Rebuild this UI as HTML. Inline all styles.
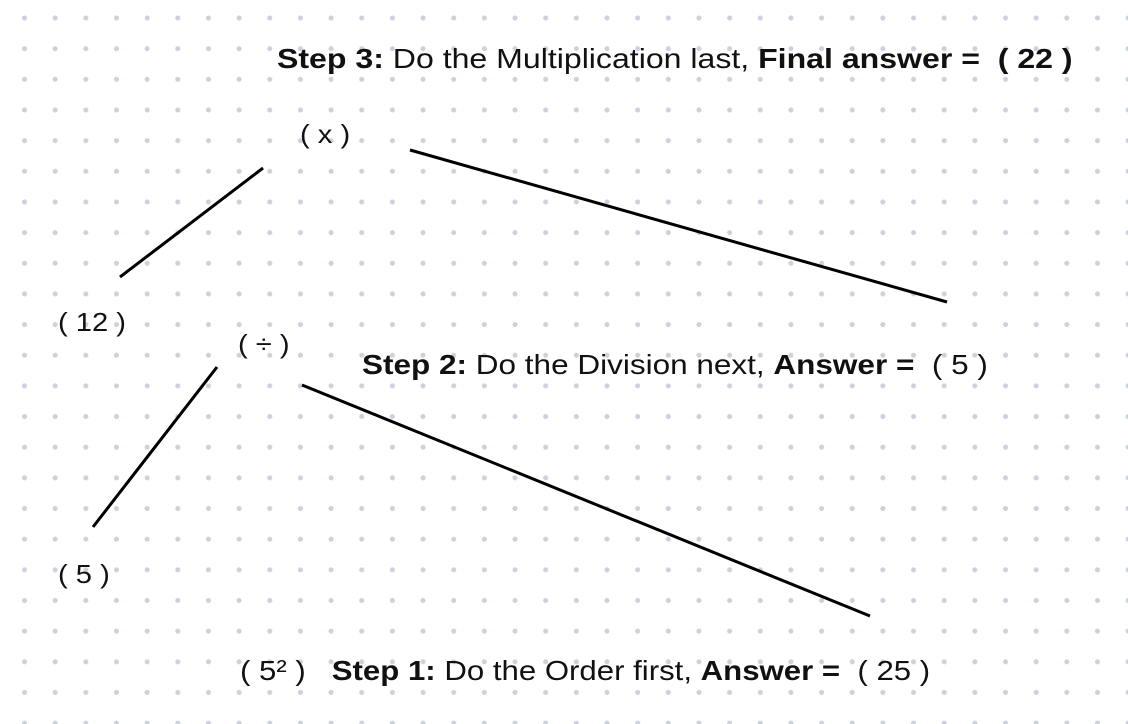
<!DOCTYPE html>
<html><head><style>
body{margin:0;width:1128px;height:724px;overflow:hidden;background-color:#fff;
background-image:radial-gradient(circle at 15.33px 15.33px,#cdd1db 2.2px,transparent 2.8px);
background-size:30.67px 30.67px;background-position:9.2px 2.7px;
font-family:"Liberation Sans",sans-serif;color:#111;position:relative}
.t{position:absolute;font-size:28px;white-space:nowrap;line-height:1;transform-origin:0 0}
b{font-weight:700}
svg{position:absolute;left:0;top:0}
</style></head><body>
<svg width="1128" height="724"><g stroke="#000" stroke-width="3" stroke-linecap="butt">
<line x1="120" y1="277" x2="263" y2="168"/>
<line x1="410" y1="150" x2="947" y2="302"/>
<line x1="217" y1="367" x2="93" y2="527"/>
<line x1="302" y1="385" x2="870" y2="616"/>
</g></svg>
<div class="t" style="left:277px;top:45px;transform:scaleX(1.145)"><b>Step 3:</b> Do the Multiplication last, <b>Final answer =&nbsp; ( 22 )</b></div>
<div class="t" style="left:300px;top:121px;font-size:26px;transform:scaleX(1.12)">( x )</div>
<div class="t" style="left:58px;top:309px;font-size:26px;transform:scaleX(1.12)">( 12 )</div>
<div class="t" style="left:238px;top:331px;font-size:26px;transform:scaleX(1.12)">( ÷ )</div>
<div class="t" style="left:362px;top:351px;transform:scaleX(1.125)"><b>Step 2:</b> Do the Division next, <b>Answer =</b>&nbsp; ( 5 )</div>
<div class="t" style="left:58px;top:561px;font-size:26px;transform:scaleX(1.12)">( 5 )</div>
<div class="t" style="left:240px;top:657px;transform:scaleX(1.113)">( 5² )&nbsp;&nbsp; <b>Step 1:</b> Do the Order first, <b>Answer =</b>&nbsp; ( 25 )</div>
</body></html>
